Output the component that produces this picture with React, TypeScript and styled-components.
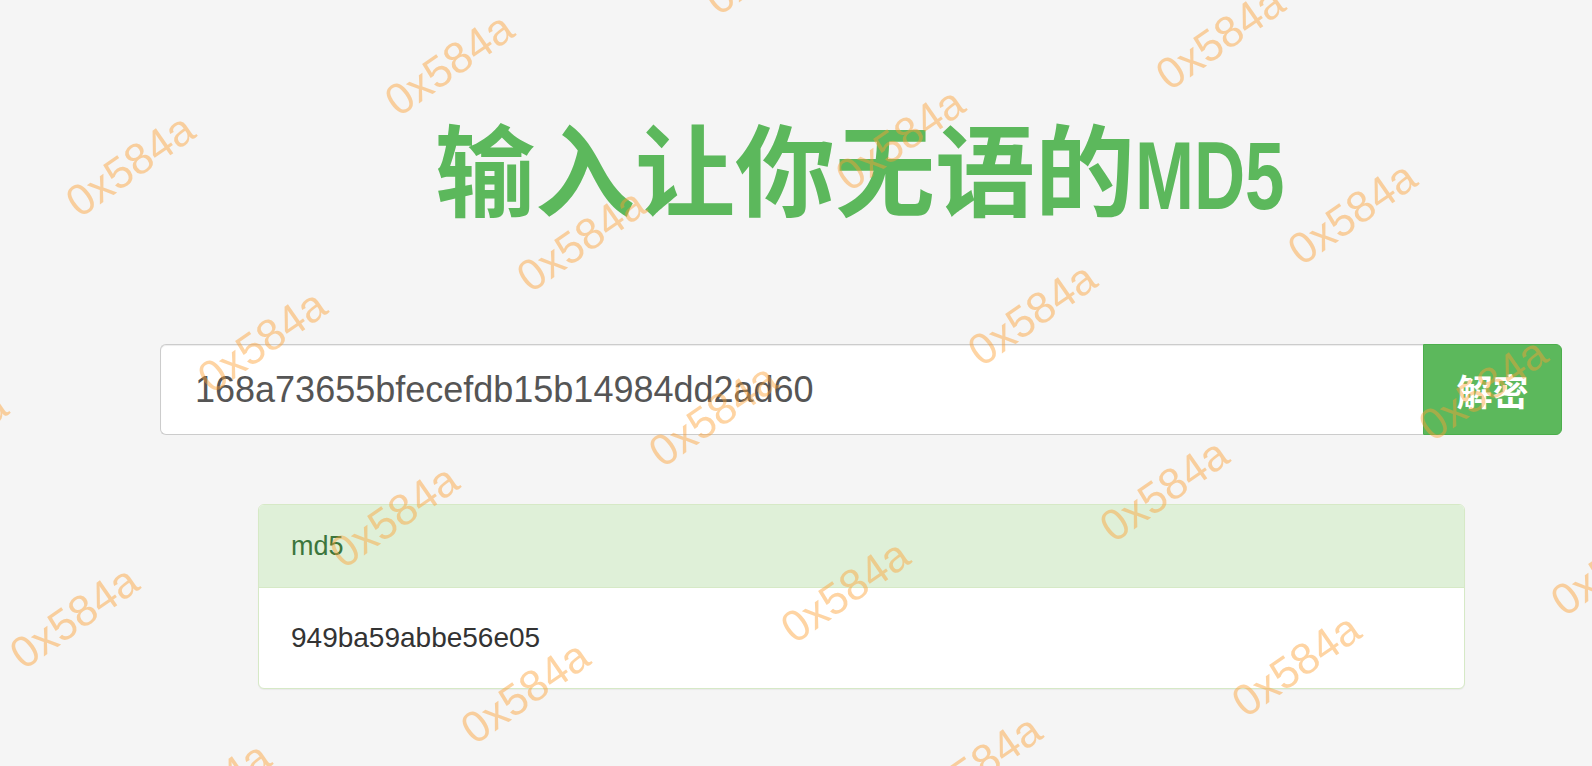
import React from "react";
import styled, { createGlobalStyle } from "styled-components";

const GlobalStyle = createGlobalStyle`
  html, body {
    margin: 0;
    padding: 0;
    background: #f5f5f5;
  }
  body {
    font-family: "Liberation Sans", Arial, "Noto Sans CJK SC", sans-serif;
    color: #333;
  }
  * {
    box-sizing: border-box;
  }
`;

const StyledPage = styled.div`
  min-height: 766px;
  padding-top: 106px;
`;

const StyledContainer = styled.div`
  width: 1402px;
  margin-left: 160px;
`;

const StyledTitle = styled.h1`
  margin: 0;
  height: 120px;
  line-height: 120px;
  text-align: center;
  white-space: nowrap;
  font-family: "Noto Sans CJK SC", sans-serif;
  font-size: 100px;
  font-weight: 700;
  color: #5cb85c;

  .latin {
    display: inline-block;
    width: 152px;
    text-align: left;
    vertical-align: top;
  }

  .latin span {
    display: inline-block;
    font-family: "Liberation Sans", Arial, sans-serif;
    font-size: 97px;
    transform: scaleX(0.73);
    transform-origin: left center;
  }
`;

const StyledGroup = styled.div`
  display: flex;
  height: 91px;
  margin-top: 118px;
`;

const StyledInput = styled.input`
  flex: 1;
  min-width: 0;
  height: 100%;
  padding: 0 34px;
  border: 1px solid #ccc;
  border-right: none;
  border-radius: 6px 0 0 6px;
  background: #fff;
  box-shadow: inset 0 1px 1px rgba(0, 0, 0, 0.075);
  font-family: "Liberation Sans", Arial, sans-serif;
  font-size: 36px;
  color: #555;
  outline: none;
`;

const StyledButton = styled.button`
  width: 139px;
  height: 100%;
  padding: 0;
  border: 1px solid #4cae4c;
  border-radius: 0 6px 6px 0;
  background: #5cb85c;
  color: #fff;
  font-family: "Noto Sans CJK SC", sans-serif;
  font-size: 36px;
  font-weight: 700;
  cursor: pointer;
`;

const StyledPanel = styled.div`
  width: 1207px;
  margin: 69px 0 0 98px;
  border: 1px solid #d6e9c6;
  border-radius: 6px;
  background: #fff;
  box-shadow: 0 1px 1px rgba(0, 0, 0, 0.05);
  overflow: hidden;
`;

const StyledPanelHeading = styled.div`
  display: flex;
  align-items: center;
  height: 83px;
  padding: 0 32px;
  background: #dff0d8;
  border-bottom: 1px solid #d6e9c6;
  color: #3c763d;
  font-size: 27px;
`;

const StyledPanelBody = styled.div`
  display: flex;
  align-items: center;
  height: 100px;
  padding: 0 32px;
  font-size: 28px;
  color: #333;
`;

const StyledWatermarks = styled.div`
  position: fixed;
  inset: 0;
  overflow: hidden;
  pointer-events: none;
  z-index: 10;
`;

const StyledMark = styled.span`
  position: absolute;
  white-space: nowrap;
  font-family: "Liberation Sans", Arial, sans-serif;
  font-size: 44px;
  line-height: 1;
  color: rgba(252, 160, 50, 0.45);
  transform: translate(-50%, -50%) rotate(-35deg);
`;

// lattice of the watermark tiles, measured from the screenshot
const origin = { x: 130, y: 165 };
const stepA = { x: 319.3, y: -101 };
const stepB = { x: 131.8, y: 175.5 };

const marks: { x: number; y: number }[] = [];
for (let a = -3; a <= 6; a++) {
  for (let b = 0; b <= 6; b++) {
    const x = origin.x + a * stepA.x + b * stepB.x;
    const y = origin.y + a * stepA.y + b * stepB.y;
    if (x > -120 && x < 1720 && y > -80 && y < 850) marks.push({ x, y });
  }
}

const Watermarks: React.FC = () => (
  <StyledWatermarks>
    {marks.map((m) => (
      <StyledMark key={`${m.x}-${m.y}`} style={{ left: m.x, top: m.y }}>
        0x584a
      </StyledMark>
    ))}
  </StyledWatermarks>
);

const App: React.FC = () => {
  return (
    <>
      <GlobalStyle />
      <StyledPage>
        <StyledContainer>
          <StyledTitle>
            输入让你无语的
            <span className="latin">
              <span>MD5</span>
            </span>
          </StyledTitle>
          <StyledGroup>
            <StyledInput defaultValue="168a73655bfecefdb15b14984dd2ad60" />
            <StyledButton>解密</StyledButton>
          </StyledGroup>
          <StyledPanel>
            <StyledPanelHeading>md5</StyledPanelHeading>
            <StyledPanelBody>949ba59abbe56e05</StyledPanelBody>
          </StyledPanel>
        </StyledContainer>
      </StyledPage>
      <Watermarks />
    </>
  );
};

export default App;
